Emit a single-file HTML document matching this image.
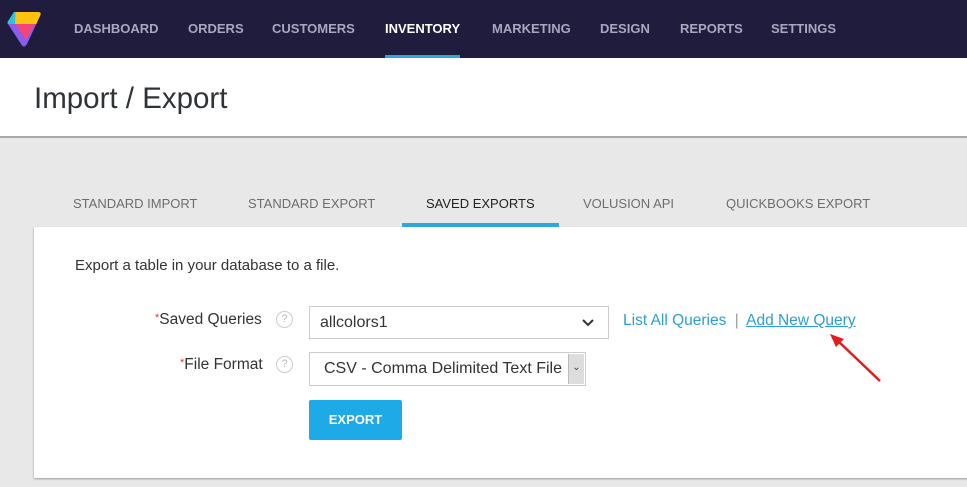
<!DOCTYPE html>
<html><head><meta charset="utf-8"><style>
*{margin:0;padding:0;box-sizing:border-box}
body{width:967px;height:487px;overflow:hidden;background:#e8e8e8;font-family:"Liberation Sans",sans-serif;position:relative}
.nav{position:absolute;left:0;top:0;width:967px;height:58px;background:#1f1c3e}
.nav span{position:absolute;top:21px;font-size:13px;font-weight:bold;color:#a9a7bf;white-space:nowrap}
.nav span.act{color:#fff}
.hdr{position:absolute;left:0;top:58px;width:967px;height:80px;background:#fff;border-bottom:2px solid #a8a8a8}
.hdr h1{position:absolute;left:34px;top:24px;font-size:29.5px;font-weight:normal;color:#2e3338}
.tab{position:absolute;top:196px;font-size:13px;color:#6d6d6d;white-space:nowrap}
.card{position:absolute;left:34px;top:227px;width:940px;height:251px;background:#fff;box-shadow:0 1px 2px #999}
.abs{position:absolute;white-space:nowrap}
.lbl{font-size:15.5px;color:#333}
.lbl b{color:#e33;font-weight:normal;font-size:11px;vertical-align:3px}
.q{width:17px;height:17px;border:1px solid #ccc;border-radius:50%;color:#bbb;font-size:11px;text-align:center;line-height:15px}
.sel{border:1px solid #ccc;background:#fff;font-size:16px;color:#333}
.link{font-size:15.5px;color:#2b9fd6}
</style></head><body>
<div class="nav">
<svg style="position:absolute;left:0;top:0" width="60" height="58" viewBox="0 0 60 58">
<defs><clipPath id="c"><path d="M14,12 L38,12 Q42,12 40,16 L27,44 Q24,49 21,44 L8,24 Q7,22 9,20 Z"/></clipPath></defs>
<g clip-path="url(#c)">
<rect x="0" y="0" width="60" height="58" fill="#8a5cf0"/>
<polygon points="0,0 60,0 60,24 0,24" fill="#ffc20e"/>
<polygon points="0,0 16,0 15,24 0,24" fill="#2ec3d8"/>
<polygon points="15,24 35,24 26,40" fill="#f2467a"/>
</g>
</svg>
<span style="left:74px">DASHBOARD</span>
<span style="left:188px">ORDERS</span>
<span style="left:272px">CUSTOMERS</span>
<span class="act" style="left:385px">INVENTORY</span>
<span style="left:492px">MARKETING</span>
<span style="left:600px">DESIGN</span>
<span style="left:680px">REPORTS</span>
<span style="left:771px">SETTINGS</span>
<div style="position:absolute;left:385px;top:55px;width:75px;height:3px;background:#2aa8e0"></div>
</div>
<div class="hdr"><h1>Import / Export</h1></div>
<div class="tab" style="left:73px">STANDARD IMPORT</div>
<div class="tab" style="left:248px">STANDARD EXPORT</div>
<div class="tab" style="left:426px;color:#222">SAVED EXPORTS</div>
<div class="tab" style="left:583px">VOLUSION API</div>
<div class="tab" style="left:726px">QUICKBOOKS EXPORT</div>
<div style="position:absolute;left:402px;top:223px;width:157px;height:4px;background:#2aa8e0"></div>
<div class="card"></div>
<div class="abs" style="left:75px;top:257px;font-size:15px;color:#333">Export a table in your database to a file.</div>
<div class="abs lbl" style="left:155px;top:311px"><b>*</b>Saved Queries</div>
<div class="abs q" style="left:276px;top:311px">?</div>
<div class="abs sel" style="left:309px;top:306px;width:300px;height:33px;padding:7px 10px">allcolors1
<svg style="position:absolute;right:14px;top:12px" width="12" height="8" viewBox="0 0 12 8"><path d="M1,1 L6,6 L11,1" stroke="#333" stroke-width="2" fill="none"/></svg></div>
<div class="abs link" style="left:623px;top:312px">List All Queries <span style="color:#999;margin:0 4px">|</span> <span style="text-decoration:underline">Add New Query</span></div>
<div class="abs lbl" style="left:180px;top:356px"><b>*</b>File Format</div>
<div class="abs q" style="left:276px;top:356px">?</div>
<div class="abs sel" style="left:309px;top:352px;width:277px;height:34px;padding:7px 14px">CSV - Comma Delimited Text File
<div style="position:absolute;right:1px;top:1px;width:16px;height:30px;background:#ddd;border-left:1px solid #bbb;text-align:center;font-size:10px;line-height:28px;color:#444">&#8964;</div></div>
<div class="abs" style="left:309px;top:400px;width:93px;height:40px;background:#1eaae7;border-radius:2px;color:#fff;font-weight:bold;font-size:13px;text-align:center;line-height:40px">EXPORT</div>
<svg style="position:absolute;left:825px;top:330px" width="60" height="55"><line x1="55" y1="51" x2="12" y2="10" stroke="#e21b1b" stroke-width="2.5"/><polygon points="5,4 19,9 11,17" fill="#e21b1b"/></svg>
</body></html>
